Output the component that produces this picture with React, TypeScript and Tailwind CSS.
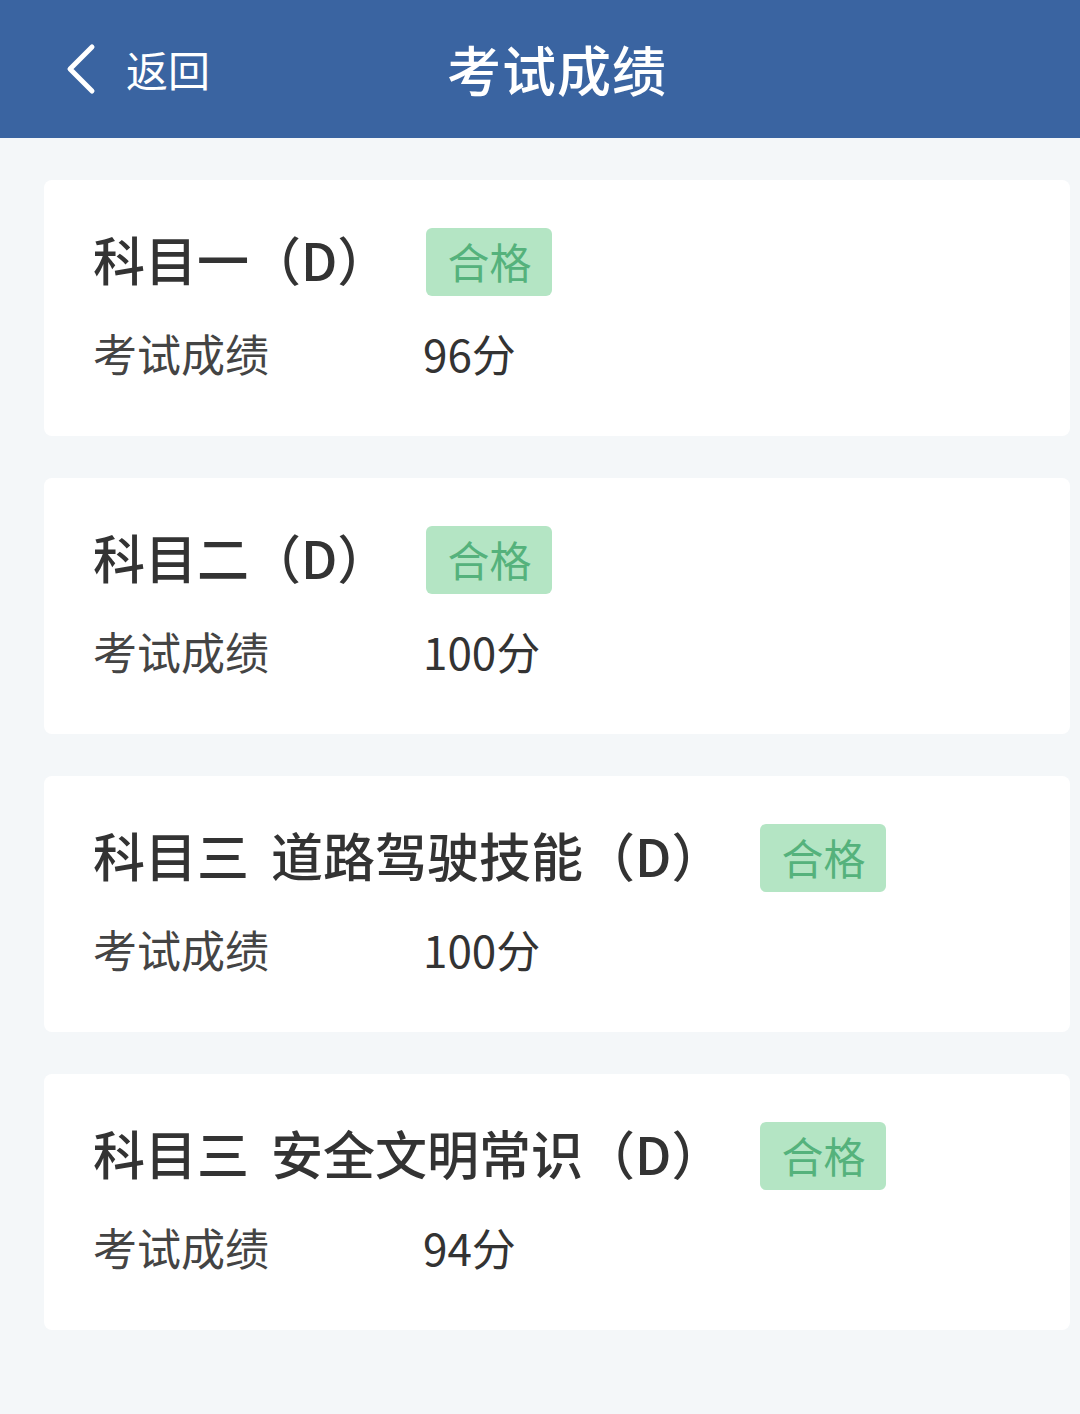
import React from "react";

const items = [
  { title: "科目一", sub: "", score: "96分" },
  { title: "科目二", sub: "", score: "100分" },
  { title: "科目三", sub: "道路驾驶技能", score: "100分" },
  { title: "科目三", sub: "安全文明常识", score: "94分" },
];

export default function App() {
  return (
    <div
      className="w-[1080px] h-[1414px] bg-[#f4f7f9] overflow-hidden"
      style={{ fontFamily: '"Noto Sans CJK SC", "Noto Sans", sans-serif' }}
    >
      <header className="h-[138px] bg-[#3a64a1] flex items-center relative">
        <div className="flex items-center pl-[64px]">
          <svg width="34" height="52" viewBox="0 0 34 52" className="mr-[28px]">
            <polyline
              points="28,4 6,26 28,48"
              fill="none"
              stroke="#ffffff"
              strokeWidth="5"
              strokeLinecap="round"
              strokeLinejoin="round"
            />
          </svg>
          <span className="text-white text-[42px] leading-none">返回</span>
        </div>
        <div className="absolute left-[447px] top-0 h-[138px] flex items-center">
          <span className="text-white text-[54px] font-medium leading-none tracking-[1px]">考试成绩</span>
        </div>
      </header>
      <main className="pt-[42px] pl-[44px] pr-[10px] flex flex-col gap-[42px]">
        {items.map((it, i) => (
          <div key={i} className="bg-white rounded-[8px] h-[256px] pt-[48px] pl-[49px] flex flex-col">
            <div className="flex items-center h-[68px]">
              <span className="text-[52px] font-medium text-[#333333] leading-none whitespace-pre mb-[6px]">
                {it.title}
                {it.sub ? <span className="ml-[22px]">{it.sub}</span> : null}
                （D）
              </span>
              <span className="ml-[37px] h-[68px] px-[21px] rounded-[6px] bg-[#b4e5c4] text-[#55b27c] text-[42px] leading-none flex items-center">
                <span className="mb-[2px]">合格</span>
              </span>
            </div>
            <div className="flex items-center h-[60px] mt-[27px] text-[44px] leading-none">
              <span className="w-[330px] text-[#444444]">考试成绩</span>
              <span className="text-[#333333]">{it.score}</span>
            </div>
          </div>
        ))}
      </main>
    </div>
  );
}
